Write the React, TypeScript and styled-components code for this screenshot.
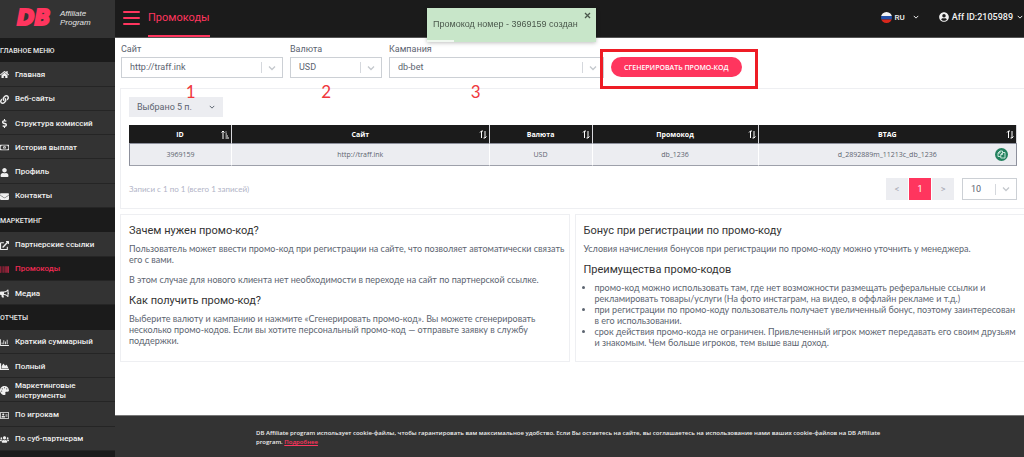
import React from 'react';
import styled, { createGlobalStyle, css } from 'styled-components';
import {
  FaHome, FaLink, FaDollarSign, FaRegMoneyBillAlt, FaUser, FaEnvelope, FaExternalLinkAlt,
  FaBarcode, FaBullhorn, FaRegChartBar, FaChartArea, FaPalette, FaRegAddressCard, FaUsers, FaUserCircle,
} from 'react-icons/fa';

const accent = '#ff355e';
const textFont = 'Lato, "Noto Sans", sans-serif';
const smallFont = '"Open Sans", "Noto Sans", sans-serif';

const GlobalStyle = createGlobalStyle`
  *, *::before, *::after { box-sizing: border-box; }
  body { margin: 0; background: #fff; color: #5c6470; font: 9px/11px Roboto, "Noto Sans", sans-serif; }
  button, select { font: inherit; color: inherit; margin: 0; border-radius: 0; cursor: pointer; }
  h1, h2, p, ul { margin: 0; }
`;

const Page = styled.div`
  display: grid;
  grid-template-columns: 115px minmax(0, 1fr);
  min-height: 100vh;
`;

const Sidebar = styled.aside`
  display: flex;
  flex-direction: column;
  background: #1b1b1b;
  padding-bottom: 6px;
`;

const Brand = styled.a`
  display: flex;
  align-items: center;
  gap: 4px;
  height: 38px;
  padding: 0 0 2px 17px;
  background: #333;
  text-decoration: none;
`;

const BrandMark = styled.span`
  color: ${accent};
  font: italic 700 21px/24px "DejaVu Sans", sans-serif;
  -webkit-text-stroke: 2px ${accent};
  width: 39px;
`;

const BrandName = styled.span`
  color: #e4e4e4;
  font: italic 8px/9px "Liberation Sans", sans-serif;
`;

const Menu = styled.nav`
  display: flex;
  flex-direction: column;
  flex: 1;
`;

const MenuHeading = styled.div`
  display: flex;
  align-items: center;
  flex: 1 0 24px;
  max-height: 28px;
  padding-top: 2px;
  color: #e8e8e8;
  font-size: 7px;
  font-weight: 500;
`;

const MenuLink = styled.a<{ $active?: boolean }>`
  display: flex;
  align-items: center;
  gap: 6px;
  flex: 1 0 24px;
  max-height: 28px;
  padding-top: 2px;
  background: ${(p) => (p.$active ? '#1b1b1b' : '#333')};
  border-bottom: 1px solid #252525;
  color: ${(p) => (p.$active ? '#ee2a52' : '#f0f0f0')};
  font-size: 8px;
  font-weight: 500;
  line-height: 10px;
  text-decoration: none;
  svg { width: 9px; height: 9px; flex: none; }
`;

const Content = styled.div`
  display: flex;
  flex-direction: column;
  min-width: 0;
`;

const TopBar = styled.header`
  display: flex;
  align-items: stretch;
  height: 38px;
  padding: 0 1px 0 8px;
  background: #1b1b1b;
  border-bottom: 1px solid #555;
`;

const Burger = styled.button`
  display: flex;
  flex-direction: column;
  gap: 4px;
  align-self: center;
  width: 17px;
  padding: 0 0 2px;
  margin-right: 8px;
  border: 0;
  background: none;
  span { height: 2px; background: ${accent}; border-radius: 1px; }
`;

const PageTitle = styled.h1`
  display: flex;
  align-items: center;
  color: ${accent};
  border-bottom: 2px solid ${accent};
  font-size: 11px;
  font-weight: 400;
`;

const UserTools = styled.div`
  display: flex;
  align-items: center;
  gap: 20px;
  margin-left: auto;
  padding-bottom: 3px;
`;

const ToolButton = styled.button<{ $small?: boolean }>`
  display: flex;
  align-items: center;
  gap: 3px;
  padding: 0;
  border: 0;
  background: none;
  color: #f0f0f0;
  font-weight: 500;
  font-size: ${(p) => (p.$small ? '8px' : '9px')};
  > svg:last-child { margin-left: ${(p) => (p.$small ? '5px' : '1px')}; }
`;

const Filters = styled.form`
  display: grid;
  grid-template-columns: 162px 92px 215px auto;
  justify-content: start;
  align-items: end;
  column-gap: 7px;
  padding: 6px 6px 0;
`;

const Field = styled.div`
  position: relative;
  display: flex;
  flex-direction: column;
  gap: 2px;
`;

const SelectBox = styled.div<{ $height?: number }>`
  position: relative;
  display: flex;
  align-items: center;
  height: ${(p) => p.$height ?? 21}px;
  border: 1px solid #ccd0d5;
  select {
    appearance: none;
    width: 100%;
    height: 100%;
    padding: 0 22px 0 8px;
    border: 0;
    background: none;
  }
`;

const SelectArrow = styled.span`
  position: absolute;
  right: 0;
  display: flex;
  align-items: center;
  justify-content: center;
  width: 21px;
  height: 11px;
  border-left: 1px solid #d5d8dd;
  color: #c4c8cd;
  pointer-events: none;
`;

const Callout = styled.span<{ $left: string }>`
  position: absolute;
  top: 100%;
  margin-top: 5px;
  left: ${(p) => p.$left};
  color: #f0383c;
  font: 17px/18px Lato, sans-serif;
  pointer-events: none;
`;

const Highlight = styled.div`
  position: relative;
  &::after {
    content: '';
    position: absolute;
    inset: -8px -16px -11px -11px;
    border: 3px solid #ee1c25;
    pointer-events: none;
  }
`;

const Generate = styled.button`
  height: 20px;
  padding: 0 13px;
  border: 0;
  border-radius: 10px;
  margin-bottom: 1px;
  display: block;
  background: ${accent};
  color: #fff;
  font-family: ${smallFont};
  font-size: 7px;
  font-weight: 600;
  white-space: nowrap;
`;

const panel = css`
  border: 1px solid #eeeff2;
`;

const TablePanel = styled.section`
  ${panel}
  border-right: 0;
  margin: 10px 0 0 5px;
  padding: 8px 7px 8px 8px;
`;

const ColumnPicker = styled.button`
  display: flex;
  align-items: center;
  justify-content: space-between;
  width: 94px;
  height: 20px;
  padding: 0 8px;
  border: 0;
  background: #ecedf1;
`;

const DataTable = styled.table`
  width: 100%;
  margin-top: 8px;
  border-collapse: separate;
  border-spacing: 0;
  table-layout: fixed;
  font: 7px/9px ${smallFont};
  text-align: center;
  th {
    height: 18px;
    padding: 0 2px;
    background: #1b1b1b;
    border-right: 1px solid #d8d8dc;
    color: #fff;
    font-weight: 700;
  }
  td {
    height: 23px;
    padding: 0 8px;
    background: #ecedf1;
    border: 1px solid #fff;
    border-width: 1px 1px 1px 0;
    border-top-color: #8d909c;
    border-bottom-color: #9da0aa;
  }
  td:first-child { border-left: 1px solid #8d909c; }
  td:last-child { border-right-color: #8d909c; }
`;

const CellContent = styled.div`
  display: grid;
  grid-template-columns: 13px 1fr 13px;
  align-items: center;
  > :first-child { grid-column: 2; }
  > :last-child:not(:first-child) { justify-self: end; }
`;

const HeadContent = styled(CellContent)`
  grid-template-columns: 8px 1fr 8px;
`;

const CopyButton = styled.button`
  display: flex;
  align-items: center;
  justify-content: center;
  width: 13px;
  height: 13px;
  padding: 0;
  border: 0;
  border-radius: 50%;
  background: #23815f;
`;

const TableFooter = styled.div`
  display: flex;
  align-items: center;
  margin-top: 12px;
`;

const Records = styled.span`
  margin-right: auto;
  color: #b0b3c6;
  font-family: ${textFont};
  font-size: 8px;
`;

const PageButton = styled.button<{ $current?: boolean }>`
  width: 22px;
  height: 22px;
  margin-right: 1px;
  padding: 0;
  border: 0;
  background: ${(p) => (p.$current ? accent : '#ecedf1')};
  color: ${(p) => (p.$current ? '#fff' : '#a9abb5')};
`;

const PageSize = styled.div`
  width: 55px;
  margin-left: 7px;
`;

const InfoGrid = styled.div`
  display: grid;
  grid-template-columns: repeat(2, minmax(0, 1fr));
  gap: 5px;
  margin: 5px 0 0 5px;
`;

const InfoPanel = styled.section`
  ${panel}
  padding: 9px 2px 13px 8px;
  font-family: ${textFont};
  &:last-child {
    padding-right: 8px;
    border-right: 0;
  }
  p { margin-bottom: 9px; }
  p:last-child { margin-bottom: 0; }
  ul { padding-left: 11px; }
`;

const InfoTitle = styled.h2`
  margin-bottom: 6px;
  color: #333;
  font-family: Roboto, "Noto Sans", sans-serif;
  font-size: 11px;
  font-weight: 400;
  line-height: 13px;
`;

const CookieBar = styled.footer`
  margin-top: auto;
  min-height: 42px;
  padding: 13px 136px 8px 141px;
  background: #333;
  border-top: 1px solid #777;
  color: #eee;
  font-family: ${smallFont};
  font-size: 6px;
  font-weight: 600;
  line-height: 9px;
  a { color: ${accent}; }
`;

const Toast = styled.div`
  position: fixed;
  top: 8px;
  left: 427px;
  width: 169px;
  height: 34px;
  padding: 11px 6px;
  background: #c8e6c9;
  box-shadow: 0 1px 4px rgba(0, 0, 0, 0.25);
  color: #4b584c;
  font-family: "Liberation Sans", sans-serif;
  white-space: nowrap;
  &::after {
    content: '';
    position: absolute;
    left: 0;
    bottom: 0;
    width: 27px;
    height: 2px;
    background: #f0f8f0;
  }
`;

const ToastClose = styled.button`
  position: absolute;
  top: 4px;
  right: 5px;
  padding: 0;
  border: 0;
  background: none;
  display: flex;
`;

const Chevron = ({ size = 6 }: { size?: number }) => (
  <svg width={size} height={size} viewBox="0 0 8 8" fill="none" stroke="currentColor" strokeWidth="1.3">
    <path d="M1 2.5 4 5.5 7 2.5" />
  </svg>
);

const SortIcon = ({ sorted }: { sorted?: boolean }) => (
  <svg width="8" height="9" viewBox="0 0 8 9" fill="none" stroke="#fff" strokeWidth="1">
    {sorted ? (
      <path d="M2 9V1M.5 2.5 2 1l1.500 1.500M4.500 2h1M4.500 4h1.500M4.500 6h2.500M4.500 8h3.500" />
    ) : (
      <path d="M2.500 8V1M1 2.500 2.500 1H4M6 1v7M4.500 8H6l1.500-1.500" />
    )}
  </svg>
);

const CopyIcon = () => (
  <svg width="9" height="9" viewBox="0 0 9 9" fill="none" stroke="#d8efe5" strokeWidth=".9">
    <path d="M3.500 6.500H1V3L3 1h2.500v1M3 1v2H1M3.800 8V4.500l1.700-2H8V8zM5.500 2.500v2H3.800" />
  </svg>
);

const Flag = () => (
  <svg width="11" height="11" viewBox="0 0 11 11">
    <clipPath id="flag"><circle cx="5.500" cy="5.500" r="5.500" /></clipPath>
    <g clipPath="url(#flag)">
      <path fill="#f4f4f4" d="M0 0h11v4H0z" />
      <path fill="#2350a8" d="M0 4h11v3.500H0z" />
      <path fill="#d9271c" d="M0 7.500h11V11H0z" />
    </g>
  </svg>
);

const menu = [
  { title: 'ГЛАВНОЕ МЕНЮ', items: [
    [FaHome, 'Главная'], [FaLink, 'Веб-сайты'], [FaDollarSign, 'Структура комиссий'],
    [FaRegMoneyBillAlt, 'История выплат'], [FaUser, 'Профиль'], [FaEnvelope, 'Контакты'],
  ] },
  { title: 'МАРКЕТИНГ', items: [
    [FaExternalLinkAlt, 'Партнерские ссылки'], [FaBarcode, 'Промокоды'], [FaBullhorn, 'Медиа'],
  ] },
  { title: 'ОТЧЕТЫ', items: [
    [FaRegChartBar, 'Краткий суммарный'], [FaChartArea, 'Полный'], [FaPalette, 'Маркетинговые инструменты'],
    [FaRegAddressCard, 'По игрокам'], [FaUsers, 'По суб-партнерам'],
  ] },
] as { title: string; items: [React.ComponentType, string][] }[];

const columns: [string, string][] = [
  ['ID', '11.6%'], ['Сайт', '29%'], ['Валюта', '11.6%'], ['Промокод', '18.7%'], ['BTAG', '29.1%'],
];

const filters = [
  { id: 'site', label: 'Сайт', value: 'http://traff.ink', mark: '1', markLeft: '40%' },
  { id: 'currency', label: 'Валюта', value: 'USD', mark: '2', markLeft: '34%' },
  { id: 'campaign', label: 'Кампания', value: 'db-bet', mark: '3', markLeft: '38%' },
];

export default function App() {
  return (
    <Page>
      <GlobalStyle />
      <Sidebar>
        <Brand href="#">
          <BrandMark>DB</BrandMark>
          <BrandName>Affiliate<br />Program</BrandName>
        </Brand>
        <Menu>
          {menu.map((group) => (
            <React.Fragment key={group.title}>
              <MenuHeading>{group.title}</MenuHeading>
              {group.items.map(([Icon, text]) => (
                <MenuLink key={text} href="#" $active={text === 'Промокоды'}>
                  <Icon />
                  <span>{text}</span>
                </MenuLink>
              ))}
            </React.Fragment>
          ))}
        </Menu>
      </Sidebar>
      <Content>
        <TopBar>
          <Burger type="button" aria-label="Меню"><span /><span /><span /></Burger>
          <PageTitle>Промокоды</PageTitle>
          <UserTools>
            <ToolButton type="button" $small><Flag />RU<Chevron /></ToolButton>
            <ToolButton type="button"><FaUserCircle size={10} />Aff ID:2105989<Chevron /></ToolButton>
          </UserTools>
        </TopBar>
        <main>
          <Filters>
            {filters.map((f) => (
              <Field key={f.id}>
                <label htmlFor={f.id}>{f.label}</label>
                <SelectBox>
                  <select id={f.id}><option>{f.value}</option></select>
                  <SelectArrow><Chevron size={8} /></SelectArrow>
                </SelectBox>
                <Callout $left={f.markLeft}>{f.mark}</Callout>
              </Field>
            ))}
            <Highlight><Generate type="button">СГЕНЕРИРОВАТЬ ПРОМО-КОД</Generate></Highlight>
          </Filters>
          <TablePanel>
            <ColumnPicker type="button">Выбрано 5 п.<Chevron /></ColumnPicker>
            <DataTable>
              <colgroup>{columns.map(([name, width]) => <col key={name} width={width} />)}</colgroup>
              <thead>
                <tr>
                  {columns.map(([name], i) => (
                    <th key={name}><HeadContent><span>{name}</span><SortIcon sorted={i === 0} /></HeadContent></th>
                  ))}
                </tr>
              </thead>
              <tbody>
                <tr>
                  <td>3969159</td>
                  <td>http://traff.ink</td>
                  <td>USD</td>
                  <td>db_1236</td>
                  <td>
                    <CellContent>
                      <span>d_2892889m_11213c_db_1236</span>
                      <CopyButton type="button" aria-label="Скопировать"><CopyIcon /></CopyButton>
                    </CellContent>
                  </td>
                </tr>
              </tbody>
            </DataTable>
            <TableFooter>
              <Records>Записи с 1 по 1 (всего 1 записей)</Records>
              <PageButton type="button">&lt;</PageButton>
              <PageButton type="button" $current>1</PageButton>
              <PageButton type="button">&gt;</PageButton>
              <PageSize>
                <SelectBox $height={22}>
                  <select aria-label="Записей на странице"><option>10</option></select>
                  <SelectArrow><Chevron size={8} /></SelectArrow>
                </SelectBox>
              </PageSize>
            </TableFooter>
          </TablePanel>
          <InfoGrid>
            <InfoPanel>
              <InfoTitle>Зачем нужен промо-код?</InfoTitle>
              <p>Пользователь может ввести промо-код при регистрации на сайте, что позволяет автоматически связать его с вами.</p>
              <p>В этом случае для нового клиента нет необходимости в переходе на сайт по партнерской ссылке.</p>
              <InfoTitle>Как получить промо-код?</InfoTitle>
              <p>Выберите валюту и кампанию и нажмите «Сгенерировать промо-код». Вы можете сгенерировать несколько промо-кодов. Если вы хотите персональный промо-код — отправьте заявку в службу поддержки.</p>
            </InfoPanel>
            <InfoPanel>
              <InfoTitle>Бонус при регистрации по промо-коду</InfoTitle>
              <p>Условия начисления бонусов при регистрации по промо-коду можно уточнить у менеджера.</p>
              <InfoTitle>Преимущества промо-кодов</InfoTitle>
              <ul>
                <li>промо-код можно использовать там, где нет возможности размещать реферальные ссылки и рекламировать товары/услуги (На фото инстаграм, на видео, в оффлайн рекламе и т.д.)</li>
                <li>при регистрации по промо-коду пользователь получает увеличенный бонус, поэтому заинтересован в его использовании.</li>
                <li>срок действия промо-кода не ограничен. Привлеченный игрок может передавать его своим друзьям и знакомым. Чем больше игроков, тем выше ваш доход.</li>
              </ul>
            </InfoPanel>
          </InfoGrid>
        </main>
        <CookieBar>
          DB Affiliate program использует cookie-файлы, чтобы гарантировать вам максимальное удобство. Если Вы остаетесь на сайте, вы соглашаетесь на использование нами ваших cookie-файлов на DB Affiliate program. <a href="#">Подробнее</a>
        </CookieBar>
      </Content>
      <Toast role="status">
        Промокод номер - 3969159 создан
        <ToastClose type="button" aria-label="Закрыть">
          <svg width="7" height="7" viewBox="0 0 7 7" stroke="#4b584c" strokeWidth="1.3"><path d="M1 1l5 5M6 1 1 6" /></svg>
        </ToastClose>
      </Toast>
    </Page>
  );
}
